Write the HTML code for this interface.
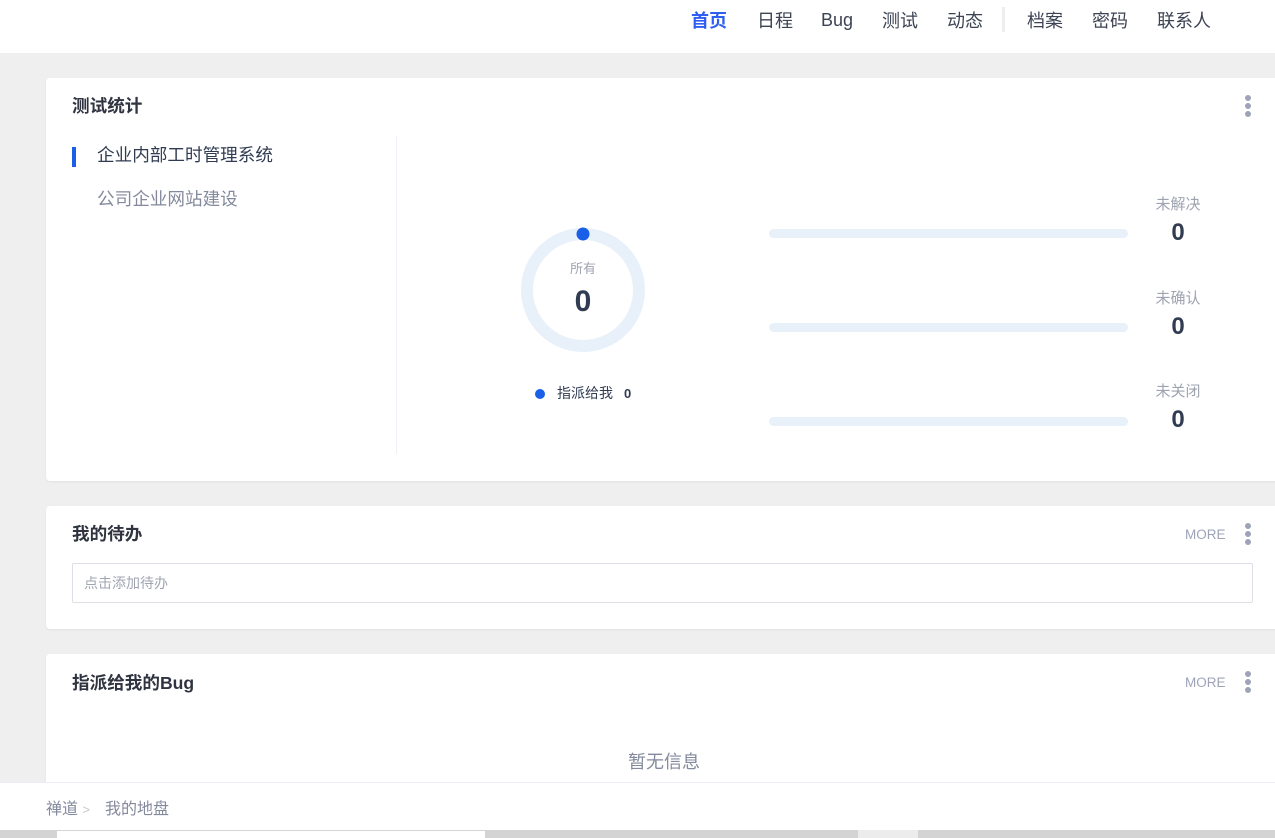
<!DOCTYPE html>
<html><head><meta charset="utf-8"><style>
*{margin:0;padding:0;box-sizing:border-box}
body{width:1275px;height:838px;overflow:hidden;background:#efefef;font-family:"Liberation Sans","Noto Sans CJK SC",sans-serif;position:relative;color:#313c52}
.a{position:absolute}
.nav{top:0;left:0;width:1275px;height:53px;background:#fff}
.nav span{position:absolute;top:7px;font-size:18px;color:#3c4353}
.card{background:#fff;border-radius:4px;box-shadow:0 1px 2px rgba(0,0,0,.06)}
.title{font-size:17.6px;font-weight:bold;color:#2f3440}
.dots{width:6px}
.dots i{display:block;width:6px;height:6px;border-radius:3px;background:#9ea3b8;margin-bottom:2px}
.more{font-size:13.5px;color:#9ea3b8}
.bar{height:9px;width:359px;left:769px;background:#e8f0fa;border-radius:5px}
.lbl{font-size:15px;color:#9ea3b0;width:60px;text-align:center;left:1148px}
.num{font-size:24px;font-weight:bold;color:#313c52;width:60px;text-align:center;left:1148px}
</style></head><body>
<div class="a nav">
<span style="left:691px;color:#2e5ff0;font-weight:bold">首页</span>
<span style="left:757px">日程</span>
<span style="left:821px;top:10px">Bug</span>
<span style="left:882px">测试</span>
<span style="left:947px">动态</span>
<div class="a" style="left:1002px;top:7px;width:3px;height:25px;background:#eee"></div>
<span style="left:1027px">档案</span>
<span style="left:1092px">密码</span>
<span style="left:1157px">联系人</span>
</div>

<div class="a card" style="left:46px;top:78px;width:1240px;height:403px"></div>
<div class="a title" style="left:72px;top:93px">测试统计</div>
<div class="a dots" style="left:1245px;top:95px"><i></i><i></i><i></i></div>
<div class="a" style="left:72px;top:147px;width:4px;height:20px;background:#1a5fe8"></div>
<div class="a" style="left:97px;top:142px;font-size:17.6px;color:#313c52">企业内部工时管理系统</div>
<div class="a" style="left:97px;top:186px;font-size:17.6px;color:#838a9d">公司企业网站建设</div>
<div class="a" style="left:396px;top:136px;width:1px;height:318px;background:#eef1f6"></div>
<svg class="a" style="left:515px;top:222px" width="136" height="136"><circle cx="68" cy="68" r="56" fill="none" stroke="#e8f0fa" stroke-width="12"/><circle cx="68" cy="12" r="6.5" fill="#1a5fe8"/></svg>
<div class="a" style="left:553px;top:258px;width:60px;text-align:center;font-size:13px;color:#9ea3b0">所有</div>
<div class="a" style="left:553px;top:285px;width:60px;text-align:center;font-size:30px;font-weight:bold;color:#313c52">0</div>
<div class="a" style="left:535px;top:389px;width:10px;height:10px;border-radius:5px;background:#1a5fe8"></div>
<div class="a" style="left:557px;top:383px;font-size:14px;color:#313c52">指派给我</div>
<div class="a" style="left:624px;top:386px;font-size:13px;font-weight:bold;color:#313c52">0</div>
<div class="a bar" style="top:229px"></div>
<div class="a bar" style="top:323px"></div>
<div class="a bar" style="top:417px"></div>
<div class="a lbl" style="top:193px">未解决</div>
<div class="a num" style="top:219px">0</div>
<div class="a lbl" style="top:287px">未确认</div>
<div class="a num" style="top:313px">0</div>
<div class="a lbl" style="top:380px">未关闭</div>
<div class="a num" style="top:406px">0</div>

<div class="a card" style="left:46px;top:506px;width:1240px;height:123px"></div>
<div class="a title" style="left:72px;top:521px">我的待办</div>
<div class="a more" style="left:1185px;top:527px">MORE</div>
<div class="a dots" style="left:1245px;top:523px"><i></i><i></i><i></i></div>
<div class="a" style="left:72px;top:563px;width:1181px;height:40px;border:1px solid #dcdfe6;border-radius:2px;font-size:14px;color:#a0a5b2;padding:9px 11px">点击添加待办</div>

<div class="a card" style="left:46px;top:654px;width:1240px;height:140px"></div>
<div class="a title" style="left:72px;top:670px">指派给我的Bug</div>
<div class="a more" style="left:1185px;top:675px">MORE</div>
<div class="a dots" style="left:1245px;top:671px"><i></i><i></i><i></i></div>
<div class="a" style="left:628px;top:748px;font-size:18px;color:#838a9d">暂无信息</div>

<div class="a" style="left:0;top:782px;width:1275px;height:48px;background:#fff;border-top:1px solid #eceef3"></div>
<div class="a" style="left:46px;top:795px;font-size:16px;color:#838a9d">禅道 <span style="color:#c5c8d0;font-size:13px">&gt;</span></div>
<div class="a" style="left:105px;top:795px;font-size:16px;color:#838a9d">我的地盘</div>
<div class="a" style="left:0;top:830px;width:1275px;height:8px;background:#d4d4d4"></div>
<div class="a" style="left:57px;top:831px;width:428px;height:7px;background:#fff"></div>
<div class="a" style="left:858px;top:830px;width:60px;height:8px;background:#ececec"></div>
</body></html>
